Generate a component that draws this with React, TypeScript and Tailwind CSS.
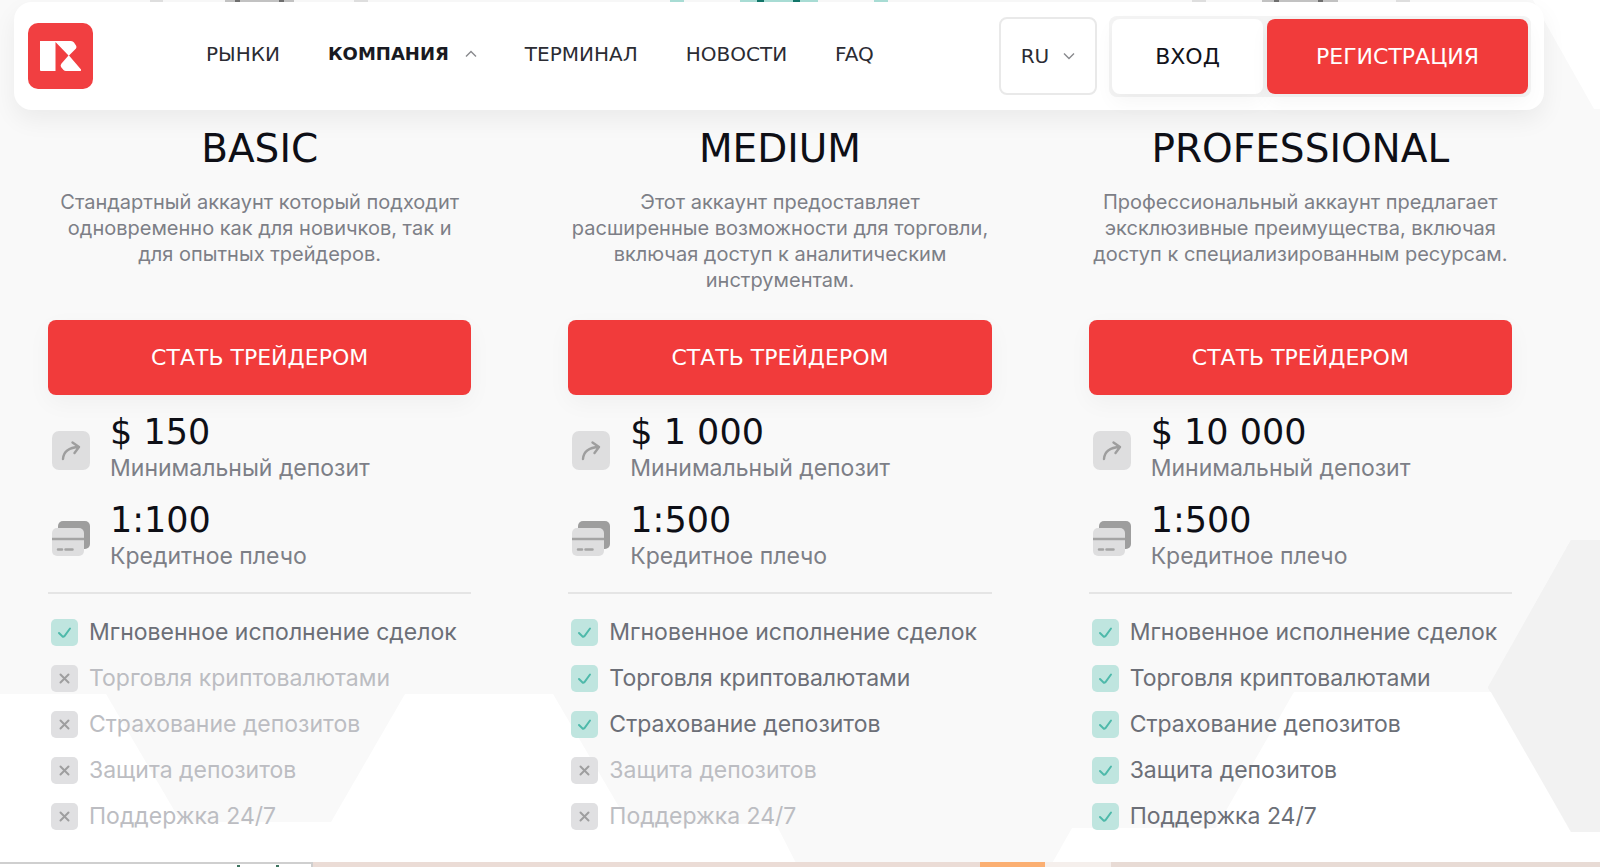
import React from "react";

type Feature = { label: string; on: boolean };
type Plan = { name: string; text: string[]; deposit: string; leverage: string; active: number };

const FEATURES = [
  "Мгновенное исполнение сделок",
  "Торговля криптовалютами",
  "Страхование депозитов",
  "Защита депозитов",
  "Поддержка 24/7",
];

const PLANS: Plan[] = [
  {
    name: "BASIC",
    text: ["Стандартный аккаунт который подходит", "одновременно как для новичков, так и", "для опытных трейдеров."],
    deposit: "$ 150",
    leverage: "1:100",
    active: 1,
  },
  {
    name: "MEDIUM",
    text: ["Этот аккаунт предоставляет", "расширенные возможности для торговли,", "включая доступ к аналитическим", "инструментам."],
    deposit: "$ 1 000",
    leverage: "1:500",
    active: 3,
  },
  {
    name: "PROFESSIONAL",
    text: ["Профессиональный аккаунт предлагает", "эксклюзивные преимущества, включая", "доступ к специализированным ресурсам."],
    deposit: "$ 10 000",
    leverage: "1:500",
    active: 5,
  },
];

const display = "font-['DejaVu_Sans',sans-serif]";

function Backdrop() {
  return (
    <svg aria-hidden="true" className="absolute inset-0 -z-10 h-full w-full" viewBox="0 0 1600 867" preserveAspectRatio="none">
      <rect width="1600" height="867" fill="#fff" />
      <path d="M0 0H1533L1545 22L1594 109H1600V692H1294L1216 828H1072L1050 867H798L776 824H629L553 694H405L331 822H181L106 694H0Z" fill="#f9f9f9" />
      <path d="M1571 540H1600V832H1571L1488 688Z" fill="#f2f2f2" />
      <path d="M1571 832L1488 692H1600V832Z" fill="#fff" />
      <path d="M1571 540H1600V832H1571L1488 687Z" fill="#f2f2f2" />
      <path d="M150 0H163V2H150ZM354 0H368V2H354ZM1192 0H1206V2H1192ZM1396 0H1410V2H1396Z" fill="#e0e0e0" />
      <path d="M225 0H294V2H225ZM1262 0H1338V2H1262Z" fill="#c4c4c4" />
      <path d="M235 0H240V2H235ZM279 0H284V2H279ZM1274 0H1279V2H1274ZM1318 0H1323V2H1318Z" fill="#6f6f6f" />
      <path d="M670 0H684V2H670ZM740 0H818V2H740ZM874 0H888V2H874Z" fill="#aaded6" />
      <path d="M757 0H764V2H757ZM793 0H800V2H793Z" fill="#13766a" />
    </svg>
  );
}

function Logo() {
  return (
    <svg viewBox="0 0 65 66" className="h-[66px] w-[65px]" role="img" aria-label="R">
      <rect width="65" height="66" rx="10" fill="#f13f41" />
      <path d="M12 18H43Q45 18 46 19.500L48 22.500Q49 24 48 25.500L41 32.500L53 46.500Q53.500 48 52 48H38Q36.500 48 35.500 47L33 44Q32 42 33.500 40.500L40.500 32.500L27.500 19V48H13Q12 48 12 47Z" fill="#fff" />
    </svg>
  );
}

function Chevron({ up = false }: { up?: boolean }) {
  return (
    <svg viewBox="0 0 12 8" className="h-2 w-3" fill="none" stroke="#88898d" strokeWidth="1.4" aria-hidden="true">
      <path d={up ? "M1 6.500L6 1.500L11 6.500" : "M1 1.500L6 6.500L11 1.500"} />
    </svg>
  );
}

function Header() {
  return (
    <header className="mt-0.5 mr-14 ml-3.5 flex h-[108px] items-center rounded-[18px] bg-white pr-[13px] pl-3.5 shadow-[0_10px_24px_rgba(0,0,0,0.06)]">
      <a href="#home"><Logo /></a>
      <nav className={`${display} ml-[113px] flex items-center gap-12 pb-1 text-xl text-[#2b2c33]`}>
        <a href="#markets">РЫНКИ</a>
        <a href="#company" className="flex items-center gap-4 text-lg font-bold text-[#191a21]">
          КОМПАНИЯ <Chevron up />
        </a>
        <a href="#terminal">ТЕРМИНАЛ</a>
        <a href="#news">НОВОСТИ</a>
        <a href="#faq">FAQ</a>
      </nav>
      <div className={`${display} ml-auto flex items-center gap-3`}>
        <button className="flex h-[78px] w-[98px] items-center justify-center gap-3.5 rounded-lg border-2 border-[#e9e9e9] text-xl text-[#2b2c33]">
          RU <Chevron />
        </button>
        <div className="flex gap-1 rounded-lg bg-[#f4f4f4] p-[3px] text-[22px]">
          <button className="h-[75px] w-[151px] rounded-lg bg-white text-[#12131a] shadow-[0_8px_20px_rgba(0,0,0,0.04)]">ВХОД</button>
          <button className="h-[75px] w-[261px] rounded-lg bg-[#f13b3b] text-white shadow-[0_8px_20px_rgba(0,0,0,0.04)]">РЕГИСТРАЦИЯ</button>
        </div>
      </div>
    </header>
  );
}

function DepositIcon() {
  return (
    <svg viewBox="0 0 38 39" className="h-[39px] w-[38px]" aria-hidden="true">
      <rect width="38" height="39" rx="7" fill="#dededf" />
      <path d="M11 28C11.500 21 15.500 16.500 27 16M20.500 11.500L27 16L22.500 22" fill="none" stroke="#9e9e9e" strokeWidth="2.400" strokeLinecap="round" strokeLinejoin="round" />
    </svg>
  );
}

function CardsIcon() {
  return (
    <svg viewBox="0 0 38 36" className="h-9 w-[38px]" aria-hidden="true">
      <rect x="6" y="1" width="32" height="28" rx="5" fill="#9e9e9e" />
      <rect y="8" width="32" height="28" rx="5" fill="#dededf" />
      <path d="M0 19H32" stroke="#a4a4a4" strokeWidth="2.500" />
      <path d="M6 29.500H10M13.500 29.500H20.500" stroke="#a4a4a4" strokeWidth="2.500" strokeLinecap="round" />
    </svg>
  );
}

function Stat({ icon, value, label }: { icon: React.ReactNode; value: string; label: string }) {
  return (
    <div className="flex h-[88px] items-center gap-5 pl-1">
      {icon}
      <div>
        <div className={`${display} text-[35px] leading-9 text-[#0e0f16]`}>{value}</div>
        <div className="text-[23px] leading-9 text-[#7d7f87]">{label}</div>
      </div>
    </div>
  );
}

function FeatureRow({ label, on }: Feature) {
  return (
    <li className={`flex h-[46px] items-center gap-[11px] pl-[3px] text-[23px] ${on ? "text-[#6c6f77]" : "text-[#bcbdc2]"}`}>
      <svg viewBox="0 0 27 27" className="size-[27px] shrink-0" fill="none" strokeWidth="2" strokeLinecap="round" aria-hidden="true">
        <rect width="27" height="27" rx="5" fill={on ? "#bfe5df" : "#e0e0e2"} />
        <path d={on ? "M8 14L11.500 17.500Q12.500 18 13.500 17L19 9.500" : "M9.500 9.500L17.500 17.500M17.500 9.500L9.500 17.500"} stroke={on ? "#4eb9aa" : "#9e9e9f"} />
      </svg>
      <span className="whitespace-nowrap">{label}</span>
    </li>
  );
}

function PlanCard({ plan }: { plan: Plan }) {
  return (
    <article>
      <h2 className={`${display} text-center text-[39px] leading-[48px] text-[#0e0f16]`}>{plan.name}</h2>
      <p className="mt-4 h-[131px] text-center text-[20px] leading-[26px] whitespace-nowrap text-[#7d7f87]">
        {plan.text.map((line) => (
          <span key={line} className="block">{line}</span>
        ))}
      </p>
      <button className={`${display} h-[75px] w-full rounded-lg bg-[#f13b3b] text-[22px] text-white shadow-[0_8px_24px_rgba(0,0,0,0.04)]`}>
        СТАТЬ ТРЕЙДЕРОМ
      </button>
      <div className="mt-[11px] border-b-2 border-[#e5e5e5] pb-2.5">
        <Stat icon={<DepositIcon />} value={plan.deposit} label="Минимальный депозит" />
        <Stat icon={<CardsIcon />} value={plan.leverage} label="Кредитное плечо" />
      </div>
      <ul className="mt-[15px]">
        {FEATURES.map((label, i) => (
          <FeatureRow key={label} label={label} on={i < plan.active} />
        ))}
      </ul>
    </article>
  );
}

export default function App() {
  return (
    <div className="relative isolate flex min-h-screen flex-col font-['Inter',sans-serif]">
      <Backdrop />
      <Header />
      <main className="mt-[15px] mr-[88px] ml-12 grid grid-cols-3 gap-[97px]">
        {PLANS.map((plan) => (
          <PlanCard key={plan.name} plan={plan} />
        ))}
      </main>
      <footer className="mt-auto flex h-[5px] bg-[#e8dbd5]">
        <div className="flex w-[313px] justify-end gap-9 border-t-2 border-r-2 border-[#cfcfcf] bg-white pr-8">
          <span className="mt-px w-[3px] bg-[#3f7560]" />
          <span className="mt-px w-[3px] bg-[#3f7560]" />
        </div>
        <div className="w-[667px] bg-[#ebdcd6]" />
        <div className="w-[65px] bg-[#fbaf72]" />
        <div className="w-[66px] bg-[#f5efec]" />
      </footer>
    </div>
  );
}
